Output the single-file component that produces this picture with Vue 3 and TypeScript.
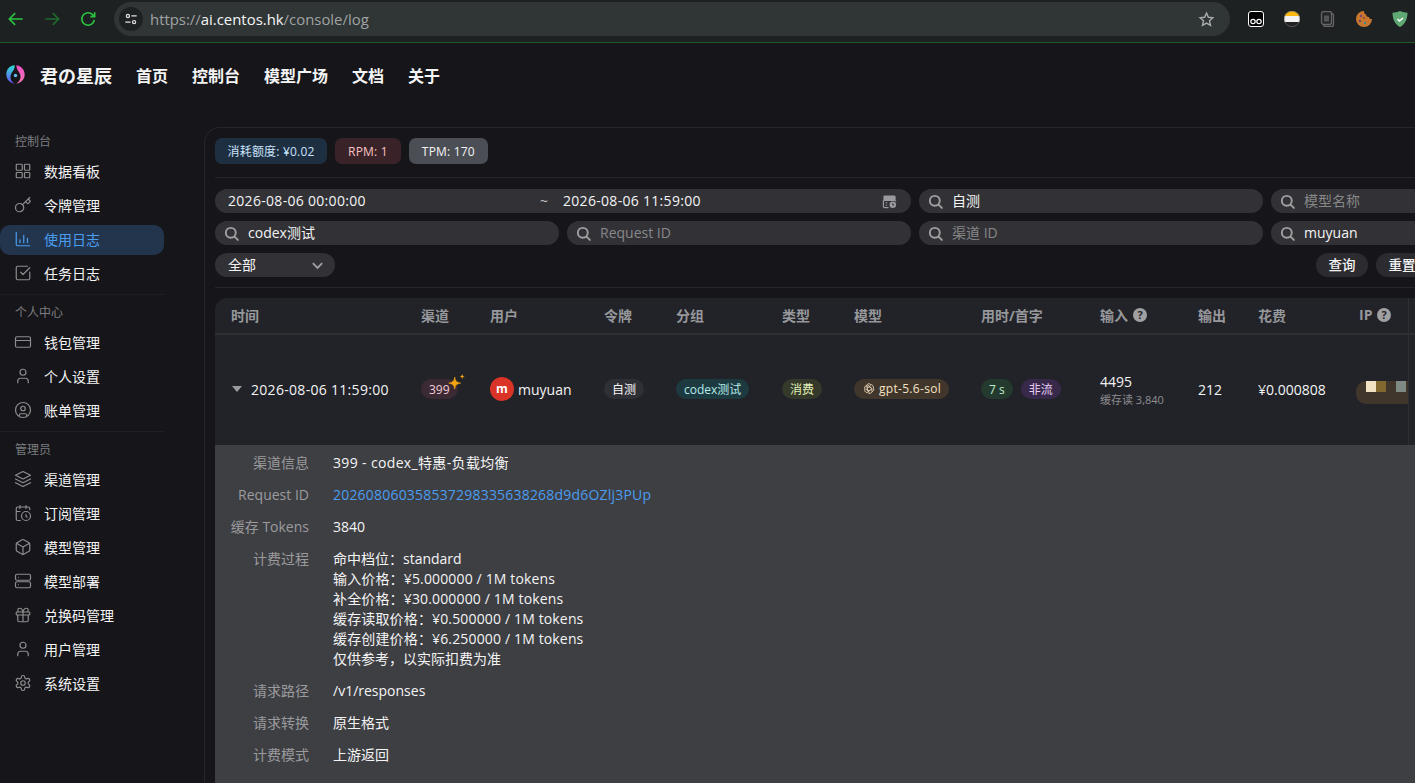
<script setup lang="ts">
const circle = (x: number, y: number, r: number) =>
  `M${x - r} ${y}a${r} ${r} 0 1 0 ${2 * r} 0a${r} ${r} 0 1 0 ${-2 * r} 0`
const rect = (x: number, y: number, w: number, h: number, r: number) =>
  `M${x + r} ${y}h${w - 2 * r}a${r} ${r} 0 0 1 ${r} ${r}v${h - 2 * r}a${r} ${r} 0 0 1 ${-r} ${r}h${-(w - 2 * r)}a${r} ${r} 0 0 1 ${-r} ${-r}v${-(h - 2 * r)}a${r} ${r} 0 0 1 ${r} ${-r}z`

const userIcon = `M19 21v-2a4 4 0 0 0-4-4H9a4 4 0 0 0-4 4v2${circle(12, 7, 4)}`

const navGroups = [
  {
    label: '控制台',
    items: [
      { text: '数据看板', d: rect(3, 3, 8, 8, 1) + rect(14, 3, 7, 8, 1) + rect(3, 14, 8, 7, 1) + rect(14, 14, 7, 7, 1) },
      { text: '令牌管理', d: `m15.5 7.5 2.3 2.3a1 1 0 0 0 1.4 0l2.1-2.1a1 1 0 0 0 0-1.4L19 4m2-2-9.6 9.6${circle(7.5, 15.5, 5.5)}` },
      { text: '使用日志', active: true, d: 'M3 3v16a2 2 0 0 0 2 2h16M18 17v-6M13 17V7M8 17v-4' },
      { text: '任务日志', d: 'M21 10.7V19a2 2 0 0 1-2 2H5a2 2 0 0 1-2-2V5a2 2 0 0 1 2-2h13m-9 8 3 3 9-9' },
    ],
  },
  {
    label: '个人中心',
    items: [
      { text: '钱包管理', d: rect(2, 5, 20, 14, 2) + 'M2 10h20' },
      { text: '个人设置', d: userIcon },
      { text: '账单管理', d: circle(12, 12, 10) + circle(12, 10, 3) + 'M7 20.7V19a2 2 0 0 1 2-2h6a2 2 0 0 1 2 2v1.7' },
    ],
  },
  {
    label: '管理员',
    items: [
      { text: '渠道管理', d: 'M12 2 2 7l10 5 10-5-10-5zM2 17l10 5 10-5M2 12l10 5 10-5' },
      { text: '订阅管理', d: `M21 7.5V6a2 2 0 0 0-2-2H5a2 2 0 0 0-2 2v14a2 2 0 0 0 2 2h3.5M16 2v4M8 2v4M3 10h5M17.5 17.5 16 16.3V14${circle(16, 16, 6)}` },
      { text: '模型管理', d: 'M21 8a2 2 0 0 0-1-1.73l-7-4a2 2 0 0 0-2 0l-7 4A2 2 0 0 0 3 8v8a2 2 0 0 0 1 1.73l7 4a2 2 0 0 0 2 0l7-4A2 2 0 0 0 21 16ZM3.3 7l8.7 5 8.7-5M12 22V12' },
      { text: '模型部署', d: rect(2, 3, 20, 8, 2) + rect(2, 13, 20, 8, 2) + 'M6 7h.01M6 17h.01' },
      { text: '兑换码管理', d: rect(3, 8, 18, 4, 1) + 'M12 8v13M19 12v7a2 2 0 0 1-2 2H7a2 2 0 0 1-2-2v-7M7.5 8a2.5 2.5 0 0 1 0-5A4.8 8 0 0 1 12 8a4.8 8 0 0 1 4.5-5 2.5 2.5 0 0 1 0 5' },
      { text: '用户管理', d: userIcon },
      { text: '系统设置', d: `M12.22 2h-.44a2 2 0 0 0-2 2v.18a2 2 0 0 1-1 1.73l-.43.25a2 2 0 0 1-2 0l-.15-.08a2 2 0 0 0-2.73.73l-.22.38a2 2 0 0 0 .73 2.73l.15.1a2 2 0 0 1 1 1.72v.51a2 2 0 0 1-1 1.74l-.15.09a2 2 0 0 0-.73 2.73l.22.38a2 2 0 0 0 2.73.73l.15-.08a2 2 0 0 1 2 0l.43.25a2 2 0 0 1 1 1.73V20a2 2 0 0 0 2 2h.44a2 2 0 0 0 2-2v-.18a2 2 0 0 1 1-1.73l.43-.25a2 2 0 0 1 2 0l.15.08a2 2 0 0 0 2.73-.73l.22-.39a2 2 0 0 0-.73-2.73l-.15-.08a2 2 0 0 1-1-1.74v-.5a2 2 0 0 1 1-1.74l.15-.09a2 2 0 0 0 .73-2.73l-.22-.38a2 2 0 0 0-2.73-.73l-.15.08a2 2 0 0 1-2 0l-.43-.25a2 2 0 0 1-1-1.73V4a2 2 0 0 0-2-2z${circle(12, 12, 3)}` },
    ],
  },
]

const topLinks = ['首页', '控制台', '模型广场', '文档', '关于']

const searchFields = [
  { value: '自测' },
  { value: '', placeholder: '模型名称' },
  { value: 'codex测试' },
  { value: '', placeholder: 'Request ID' },
  { value: '', placeholder: '渠道 ID' },
  { value: 'muyuan' },
]

const columns = [
  { label: '时间' }, { label: '渠道' }, { label: '用户' }, { label: '令牌' },
  { label: '分组' }, { label: '类型' }, { label: '模型' }, { label: '用时/首字' },
  { label: '输入', help: true }, { label: '输出' }, { label: '花费' }, { label: 'IP', help: true },
]

const billing = [
  '命中档位：standard',
  '输入价格：¥5.000000 / 1M tokens',
  '补全价格：¥30.000000 / 1M tokens',
  '缓存读取价格：¥0.500000 / 1M tokens',
  '缓存创建价格：¥6.250000 / 1M tokens',
  '仅供参考，以实际扣费为准',
]

const searchPath = circle(11, 11, 7) + 'M16 16l5 5'
</script>

<template>
  <div class="screen">
    <div class="browser">
      <div class="browser__nav">
        <svg class="browser__btn" viewBox="0 0 24 24"><path d="M20 12H5m6-7-7 7 7 7" /></svg>
        <svg class="browser__btn browser__btn--dim" viewBox="0 0 24 24"><path d="M4 12h15m-6-7 7 7-7 7" /></svg>
        <svg class="browser__btn" viewBox="0 0 24 24"><path d="M19.5 13a7.5 7.5 0 1 1-2-6.2L20 9.2M20 4v5.2h-5.2" /></svg>
      </div>
      <div class="omnibox">
        <span class="omnibox__tune">
          <svg viewBox="0 0 16 16"><circle cx="4.5" cy="4.5" r="1.8" /><path d="M8.5 4.5h6M1.5 11.5h6" /><circle cx="11.5" cy="11.5" r="1.8" /></svg>
        </span>
        <span class="omnibox__url">https://<b>ai.centos.hk</b>/console/log</span>
        <svg class="omnibox__star" viewBox="0 0 24 24"><path d="m12 3 2.7 5.9 6.3.7-4.7 4.300 1.300 6.300-5.600-3.200-5.600 3.200 1.300-6.300L3 9.600l6.300-.7z" /></svg>
      </div>
      <div class="exts">
        <svg class="ext" viewBox="1 1 16 16"><rect x="1.500" y="1.500" width="15" height="15" rx="2.500" fill="#000" stroke="#fff" stroke-width="1" /><circle cx="6" cy="11.500" r="2.200" fill="none" stroke="#fff" stroke-width="1.200" /><circle cx="12" cy="11.500" r="2.200" fill="none" stroke="#fff" stroke-width="1.200" /></svg>
        <svg class="ext" viewBox="1 1 16 16"><clipPath id="ball"><circle cx="9" cy="9" r="8" /></clipPath><g clip-path="url(#ball)"><rect width="18" height="6" fill="#fbb80f" /><rect y="6" width="18" height="6" fill="#f2f2f2" /><rect y="12" width="18" height="6" fill="#222" /></g><circle cx="9" cy="9" r="7.700" fill="none" stroke="#777" stroke-width=".6" /></svg>
        <svg class="ext" viewBox="1 1 16 16"><rect x="4.500" y="3.500" width="10" height="13" rx="2" fill="none" stroke="#666" stroke-width="1.300" /><rect x="2.500" y="1.500" width="10" height="13" rx="2" fill="#242728" stroke="#666" stroke-width="1.300" /><rect x="5" y="5.500" width="5" height="6" fill="#555" /></svg>
        <svg class="ext" viewBox="1 1 16 16"><path d="M9 1a8 8 0 1 0 8 8c-1.700.4-3-.6-3-2-1.700.3-3-.9-2.800-2.500C9.800 4.400 9 3 9 1z" fill="#c9772f" /><circle cx="6" cy="6" r="1.200" fill="#7a3f7d" /><circle cx="5" cy="11" r="1.100" fill="#4f3a7a" /><circle cx="10" cy="13" r="1.200" fill="#3d8a8a" /><circle cx="9" cy="8" r="1" fill="#8a4a20" /></svg>
        <svg class="ext" viewBox="1 1 16 16"><path d="M9 1c2.500 1.200 5 1.700 7.500 1.700 0 6.500-2.500 11.500-7.500 14.300C4 14.200 1.500 9.200 1.500 2.700 4 2.700 6.500 2.200 9 1z" fill="#5fa873" /><path d="m6.500 9 2 2 3.500-3" fill="none" stroke="#fff" stroke-width="1.500" /></svg>
      </div>
    </div>

    <header class="topbar">
      <svg class="topbar__logo" viewBox="0 0 24 24">
        <defs>
          <linearGradient id="logoLeft" x1="0" y1="0" x2="0" y2="1"><stop offset="0" stop-color="#2fe0d8" /><stop offset="1" stop-color="#6a4df0" /></linearGradient>
          <linearGradient id="logoRight" x1="0" y1="0" x2="0" y2="1"><stop offset="0" stop-color="#f050c8" /><stop offset="1" stop-color="#f07ab0" /></linearGradient>
        </defs>
        <path d="M11 1.500C5 2 1.500 6.500 1.500 12S6 22 11 22.500C7 20 5.500 16.500 6.500 13 7.500 9 11.500 7 11 1.500z" fill="url(#logoLeft)" />
        <path d="M13 1.500c5 .5 9.500 5 9.500 10.500S18 21.900 13 22.500c4-3 5.500-6.500 4.500-10C16.500 9 13 6.500 13 1.500z" fill="url(#logoRight)" />
        <circle cx="12" cy="13" r="2" fill="#5fb8f0" />
      </svg>
      <span class="topbar__brand">君の星辰</span>
      <nav class="topbar__links">
        <span v-for="link in topLinks" :key="link">{{ link }}</span>
      </nav>
    </header>

    <div class="main">
      <aside class="sidebar">
        <section v-for="group in navGroups" :key="group.label" class="sidebar__group">
          <p class="sidebar__label">{{ group.label }}</p>
          <div
            v-for="item in group.items"
            :key="item.text"
            class="sidebar__item"
            :class="{ 'sidebar__item--active': item.active }"
          >
            <svg class="sidebar__icon" viewBox="0 0 24 24"><path :d="item.d" /></svg>
            <span>{{ item.text }}</span>
          </div>
        </section>
      </aside>

      <main class="panel">
        <div class="stats">
          <span class="stat stat--blue">消耗额度: ¥0.02</span>
          <span class="stat stat--red">RPM: 1</span>
          <span class="stat stat--grey">TPM: 170</span>
        </div>

        <div class="filters">
          <div class="field field--date">
            <span class="field__from">2026-08-06 00:00:00</span>
            <span class="field__sep">~</span>
            <span class="field__to">2026-08-06 11:59:00</span>
            <svg class="field__cal" viewBox="0 0 16 16">
              <path d="M3 1.500h10A1.500 1.500 0 0 1 14.500 3v4.500h-13V3A1.500 1.500 0 0 1 3 1.500z" fill="#9a9a9e" />
              <path d="M1.500 7v6A1.500 1.500 0 0 0 3 14.500h4M14.500 7v1" fill="none" stroke="#9a9a9e" stroke-width="1.300" />
              <path d="M4 9.500h1.500M4 12h1.500" stroke="#9a9a9e" stroke-width="1.300" />
              <circle cx="11.500" cy="11.500" r="3.500" fill="#9a9a9e" />
              <path d="M11.500 9.800v2h1.500" fill="none" stroke="#323236" stroke-width="1" />
            </svg>
          </div>
          <div v-for="field in searchFields" :key="field.value + field.placeholder" class="field">
            <svg class="field__search" viewBox="0 0 24 24"><path :d="searchPath" /></svg>
            <span :class="{ field__hint: !field.value }">{{ field.value || field.placeholder }}</span>
          </div>
          <div class="field field--select">
            <span>全部</span>
            <svg viewBox="0 0 16 16"><path d="m3 5.500 5 5 5-5" /></svg>
          </div>
          <div class="actions">
            <span class="action">查询</span>
            <span class="action">重置</span>
          </div>
        </div>

        <div class="table">
          <div class="table__head table__grid">
            <div v-for="col in columns" :key="col.label" class="table__th">
              {{ col.label }}
              <svg v-if="col.help" class="table__help" viewBox="0 0 14 14">
                <circle cx="7" cy="7" r="7" fill="#a0a0a3" />
                <text x="7" y="10.500" text-anchor="middle">?</text>
              </svg>
            </div>
            <div class="table__fixed" />
          </div>

          <div class="table__row table__grid">
            <div class="table__td time">
              <span class="time__caret" />
              <span class="time__value">2026-08-06 11:59:00</span>
            </div>
            <div class="table__td">
              <span class="pill pill--channel">399
                <svg class="pill__spark" viewBox="0 0 16 16">
                  <path d="M6.500 3.500c.6 3.400 1.600 4.400 5 5-3.400.6-4.400 1.600-5 5-.6-3.400-1.600-4.400-5-5 3.400-.6 4.400-1.600 5-5z" fill="#f5a30f" stroke="#f5a30f" stroke-width=".6" />
                  <path d="M12.800 .8c.3 1.500.7 1.900 2.200 2.200-1.500.3-1.900.7-2.200 2.200-.3-1.500-.7-1.900-2.200-2.200 1.500-.3 1.900-.7 2.200-2.200z" fill="#f5a30f" />
                </svg>
              </span>
            </div>
            <div class="table__td user">
              <span class="user__avatar">m</span>
              <span>muyuan</span>
            </div>
            <div class="table__td"><span class="pill pill--grey">自测</span></div>
            <div class="table__td"><span class="pill pill--teal">codex测试</span></div>
            <div class="table__td"><span class="pill pill--olive">消费</span></div>
            <div class="table__td">
              <span class="pill pill--brown">
                <svg class="pill__model" viewBox="0 0 24 24"><path d="M12 3c-2 0-3.500 1.200-4 3-2 .3-3.500 2-3.500 4 0 .8.200 1.500.6 2.100-.8 1.800-.3 4 1.400 5.200 1 .8 2.200 1 3.300.8 1 1.200 2.800 1.800 4.400 1.300 1.400-.4 2.400-1.500 2.800-2.800 1.800-.4 3.100-2 3.100-3.900 0-.9-.3-1.700-.8-2.400.6-1.800 0-3.800-1.600-4.900-1-.8-2.300-1-3.500-.7C14.600 3.600 13.400 3 12 3zM9 8v7l4 2.500M12 5.500 7 8.500M12 8l5 3v5M15 6.500 9.500 10M7 12l5 3 5-3" /></svg>
                gpt-5.6-sol
              </span>
            </div>
            <div class="table__td table__td--pills">
              <span class="pill pill--green">7 s</span>
              <span class="pill pill--purple">非流</span>
            </div>
            <div class="table__td usage">
              <span>4495</span>
              <small>缓存读 3,840</small>
            </div>
            <div class="table__td">212</div>
            <div class="table__td">¥0.000808</div>
            <div class="table__td">
              <div class="blur-ip">
                <i class="blur-ip__cell blur-ip__cell--cream" />
                <i class="blur-ip__cell blur-ip__cell--gold" />
                <i class="blur-ip__gap" />
                <i class="blur-ip__cell blur-ip__cell--slate" />
              </div>
            </div>
            <div class="table__fixed table__fixed--row" />
          </div>

          <dl class="detail">
            <div class="detail__row">
              <dt>渠道信息</dt>
              <dd class="detail__wide">399 - codex_特惠-负载均衡</dd>
            </div>
            <div class="detail__row">
              <dt>Request ID</dt>
              <dd class="detail__link">202608060358537298335638268d9d6OZlj3PUp</dd>
            </div>
            <div class="detail__row">
              <dt>缓存 Tokens</dt>
              <dd>3840</dd>
            </div>
            <div class="detail__row">
              <dt>计费过程</dt>
              <dd class="detail__lines">
                <span v-for="line in billing" :key="line" :class="{ detail__num: /\d/.test(line) }">{{ line }}</span>
              </dd>
            </div>
            <div class="detail__row">
              <dt>请求路径</dt>
              <dd>/v1/responses</dd>
            </div>
            <div class="detail__row">
              <dt>请求转换</dt>
              <dd>原生格式</dd>
            </div>
            <div class="detail__row">
              <dt>计费模式</dt>
              <dd>上游返回</dd>
            </div>
          </dl>
        </div>
      </main>
    </div>
  </div>
</template>

<style>
html, body {
  margin: 0;
  height: 100%;
  overflow: hidden;
  background: #16161a;
}
</style>

<style scoped>
.screen {
  height: 783px;
  overflow: hidden;
  display: flex;
  flex-direction: column;
  background: #16161a;
  color: #f4f4f5;
  font-family: "Open Sans", "Noto Sans CJK SC", sans-serif;
  font-size: 14px;
}

/* browser chrome */
.browser {
  flex: none;
  height: 43px;
  box-sizing: border-box;
  display: flex;
  align-items: flex-start;
  background: #1e2122;
  border-bottom: 1px solid #1f5a26;
}
.browser__nav {
  width: 114px;
  flex: none;
  display: flex;
  gap: 16px;
  padding: 9px 0 0 6px;
  box-sizing: border-box;
}
.browser__btn {
  width: 20px;
  height: 20px;
  fill: none;
  stroke: #2bc240;
  stroke-width: 2;
}
.browser__btn--dim {
  stroke: #1f6a2b;
}
.omnibox {
  width: 1116px;
  height: 34px;
  margin-top: 2px;
  flex: none;
  display: flex;
  align-items: center;
  padding: 0 15px 0 5px;
  box-sizing: border-box;
  border-radius: 17px;
  background: #303536;
}
.omnibox__tune {
  width: 24px;
  height: 24px;
  border-radius: 50%;
  background: #1e2122;
  display: flex;
  align-items: center;
  justify-content: center;
}
.omnibox__tune svg {
  width: 14px;
  height: 14px;
  fill: none;
  stroke: #e3e3e3;
  stroke-width: 1.4;
}
.omnibox__url {
  margin-left: 7px;
  flex: 1;
  font-size: 14.9px;
  color: #a0a3a3;
}
.omnibox__url b {
  font-weight: 400;
  color: #f4f6f6;
}
.omnibox__star {
  width: 17px;
  height: 17px;
  fill: none;
  stroke: #a8abab;
  stroke-width: 2;
}
.exts {
  flex: 1;
  height: 38px;
  display: flex;
  align-items: center;
  gap: 20px;
  padding-left: 18px;
}
.ext {
  width: 16px;
  height: 16px;
  flex: none;
}

/* top navigation */
.topbar {
  flex: none;
  height: 67px;
  display: flex;
  align-items: center;
  padding: 0 0 3px 5px;
  box-sizing: border-box;
}
.topbar__logo {
  width: 21px;
  height: 21px;
  flex: none;
  margin-top: -1px;
}
.topbar__brand {
  margin-left: 14px;
  font-size: 18px;
  font-weight: 700;
}
.topbar__links {
  margin-left: 24px;
  display: flex;
  gap: 24px;
  font-size: 16px;
  font-weight: 700;
}

/* sidebar */
.main {
  flex: 1;
  min-height: 0;
  display: flex;
  padding-top: 17px;
}
.sidebar {
  width: 204px;
  flex: none;
  padding-top: 4px;
  box-sizing: border-box;
}
.sidebar__group {
  width: 164px;
  display: flex;
  flex-direction: column;
  gap: 4px;
  padding-bottom: 5px;
  margin-bottom: 7px;
  border-bottom: 1px solid #1f1f23;
}
.sidebar__group:last-child {
  border-bottom: 0;
}
.sidebar__label {
  margin: 0;
  height: 22px;
  padding-left: 15px;
  font-size: 12px;
  line-height: 22px;
  color: #7d7d80;
}
.sidebar__item {
  height: 30px;
  box-sizing: border-box;
  padding: 0 0 2px 14px;
  display: flex;
  align-items: center;
  gap: 12px;
  border-radius: 10px;
  font-size: 14px;
  color: #f4f4f5;
}
.sidebar__item--active {
  background: #23354d;
  color: #4a9df0;
}
.sidebar__icon {
  width: 18px;
  height: 18px;
  flex: none;
  fill: none;
  stroke: #8d8d90;
  stroke-width: 1.6;
  stroke-linecap: round;
  stroke-linejoin: round;
}
.sidebar__item--active .sidebar__icon {
  stroke: #4a9df0;
}

/* main panel */
.panel {
  flex: none;
  width: 1420px;
  box-sizing: border-box;
  padding: 10px 10px 0;
  border: 1px solid #26262a;
  border-right: 0;
  border-bottom: 0;
  border-radius: 16px 0 0 0;
}
.stats {
  display: flex;
  gap: 8px;
  padding-bottom: 13px;
  border-bottom: 1px solid #26262a;
}
.stat {
  height: 26px;
  padding: 0 13px;
  display: flex;
  align-items: center;
  border-radius: 7px;
  font-size: 12px;
  letter-spacing: .2px;
}
.stat--blue {
  padding: 0 12.5px;
  background: #1e2f42;
  color: #c8e2fa;
}
.stat--red {
  background: #3a2229;
  color: #f8c4c0;
}
.stat--grey {
  background: #4c4e55;
  color: #f4f4f5;
}

.filters {
  display: grid;
  grid-template-columns: repeat(4, 344px);
  gap: 8px;
  padding: 11px 0 10px;
  border-bottom: 1px solid #26262a;
}
.field {
  height: 24px;
  display: flex;
  align-items: center;
  padding-left: 8px;
  border-radius: 12px;
  background: #323236;
  font-size: 14px;
}
.field span {
  margin-top: -2px;
}
.field__search {
  width: 17px;
  height: 17px;
  margin-right: 8px;
  flex: none;
  fill: none;
  stroke: #a0a0a3;
  stroke-width: 2.7;
  stroke-linecap: round;
}
.field__hint {
  color: #87878a;
}
.field--date {
  grid-column: span 2;
  padding-left: 13px;
}
.field__from {
  width: 312px;
  flex: none;
  letter-spacing: .3px;
}
.field__sep {
  width: 23px;
  flex: none;
  color: #c9c9cb;
}
.field__to {
  flex: 1;
  letter-spacing: .3px;
}
.field__cal {
  width: 15px;
  height: 15px;
  margin-right: 14px;
}
.field--select {
  justify-content: space-between;
  width: 120px;
  padding: 0 10px 0 13px;
  box-sizing: border-box;
}
.field--select svg {
  width: 15px;
  height: 15px;
  fill: none;
  stroke: #a0a0a3;
  stroke-width: 2;
}
.actions {
  grid-column: 2 / span 3;
  justify-self: start;
  margin-left: 749px;
  display: flex;
  gap: 8px;
}
.action {
  width: 52px;
  height: 24px;
  padding-bottom: 2px;
  box-sizing: border-box;
  display: flex;
  align-items: center;
  justify-content: center;
  border-radius: 12px;
  background: #2c2c30;
  font-size: 13.5px;
  font-weight: 500;
  flex: none;
}

/* table */
.table {
  margin-top: 10px;
  border-radius: 12px 0 0 0;
  overflow: hidden;
  background: #222328;
}
.table__grid {
  display: grid;
  grid-template-columns: 190px 69px 114px 72px 106px 72px 127px 119px 98px 60px 101px 65px 1fr;
}
.table__head {
  height: 37px;
  box-sizing: border-box;
  border-bottom: 2px solid #2e2f33;
  align-items: center;
}
.table__th {
  padding: 0 0 2px 16px;
  display: flex;
  align-items: center;
  gap: 5px;
  font-size: 14px;
  font-weight: 700;
  color: #96989c;
  white-space: nowrap;
}
.table__help {
  width: 14px;
  height: 14px;
}
.table__help text {
  font-size: 11px;
  font-weight: 700;
  fill: #222328;
}
.table__fixed {
  height: 35px;
  border-left: 1px solid #2e2f33;
}
.table__fixed--row {
  height: 110px;
}
.table__row {
  height: 110px;
  align-items: center;
}
.table__td {
  padding: 0 0 2px 16px;
  font-size: 14px;
  white-space: nowrap;
}
.table__td--pills {
  display: flex;
  gap: 8px;
}
.time {
  display: flex;
  align-items: center;
  gap: 9px;
  padding-left: 17px;
}
.time__value {
  letter-spacing: .3px;
}
.time__caret {
  width: 0;
  height: 0;
  border-style: solid;
  border-width: 6px 5px 0;
  border-color: #9b9b9e transparent transparent;
}
.pill {
  position: relative;
  display: inline-flex;
  align-items: center;
  height: 20px;
  padding: 0 8px;
  border-radius: 10px;
  font-size: 12px;
}
.pill--channel {
  background: #3b2a34;
  color: #f6cbd8;
}
.pill__spark {
  position: absolute;
  top: -6px;
  left: 26px;
  width: 19px;
  height: 19px;
}
.pill--grey {
  background: #2f3035;
}
.pill--teal {
  background: #1e3a41;
  color: #b4ebea;
}
.pill--olive {
  background: #34392a;
  color: #e1f0b8;
}
.pill--brown {
  background: #40362b;
  color: #f7e3c5;
  letter-spacing: .3px;
}
.pill__model {
  width: 14px;
  height: 14px;
  margin-right: 3px;
  fill: none;
  stroke: #f7e3c5;
  stroke-width: 1.5;
}
.pill--green {
  background: #243a2f;
  color: #c2ecd0;
}
.pill--purple {
  background: #38294a;
  color: #e9cdf7;
}
.user {
  display: flex;
  align-items: center;
  gap: 4px;
}
.user__avatar {
  width: 24px;
  height: 24px;
  border-radius: 50%;
  background: #d93427;
  display: flex;
  align-items: center;
  justify-content: center;
  font-size: 12px;
  font-weight: 700;
  line-height: 1;
  color: #fff;
}
.usage {
  display: flex;
  flex-direction: column;
}
.usage small {
  margin-top: 2px;
  font-size: 11px;
  line-height: 14px;
  color: #8d8d91;
}
.blur-ip {
  display: flex;
  align-items: flex-start;
  width: 52px;
  height: 23px;
  margin: 7px 0 0 -3px;
  padding-left: 10px;
  box-sizing: border-box;
  border-radius: 10px 0 0 10px;
  background: #40362b;
}
.blur-ip__cell {
  width: 10px;
  height: 11px;
}
.blur-ip__cell--cream {
  background: #f0e2c3;
}
.blur-ip__cell--gold {
  background: #82682f;
}
.blur-ip__cell--slate {
  background: #7f8a84;
}
.blur-ip__gap {
  width: 10px;
}
.detail {
  margin: 0;
  padding: 8px 0 0;
  background: #3e3f43;
  font-size: 14px;
  min-height: 338px;
}
.detail__row {
  display: flex;
  padding-bottom: 12px;
  line-height: 20px;
}
.detail dt {
  width: 94px;
  flex: none;
  text-align: right;
  color: #9b9b9e;
}
.detail dd {
  margin: 0 0 0 24px;
}
.detail .detail__wide {
  letter-spacing: .35px;
}
.detail__link {
  color: #4a9df0;
  letter-spacing: .2px;
}
.detail__lines {
  display: flex;
  flex-direction: column;
}
.detail__num {
  letter-spacing: .15px;
}
</style>
